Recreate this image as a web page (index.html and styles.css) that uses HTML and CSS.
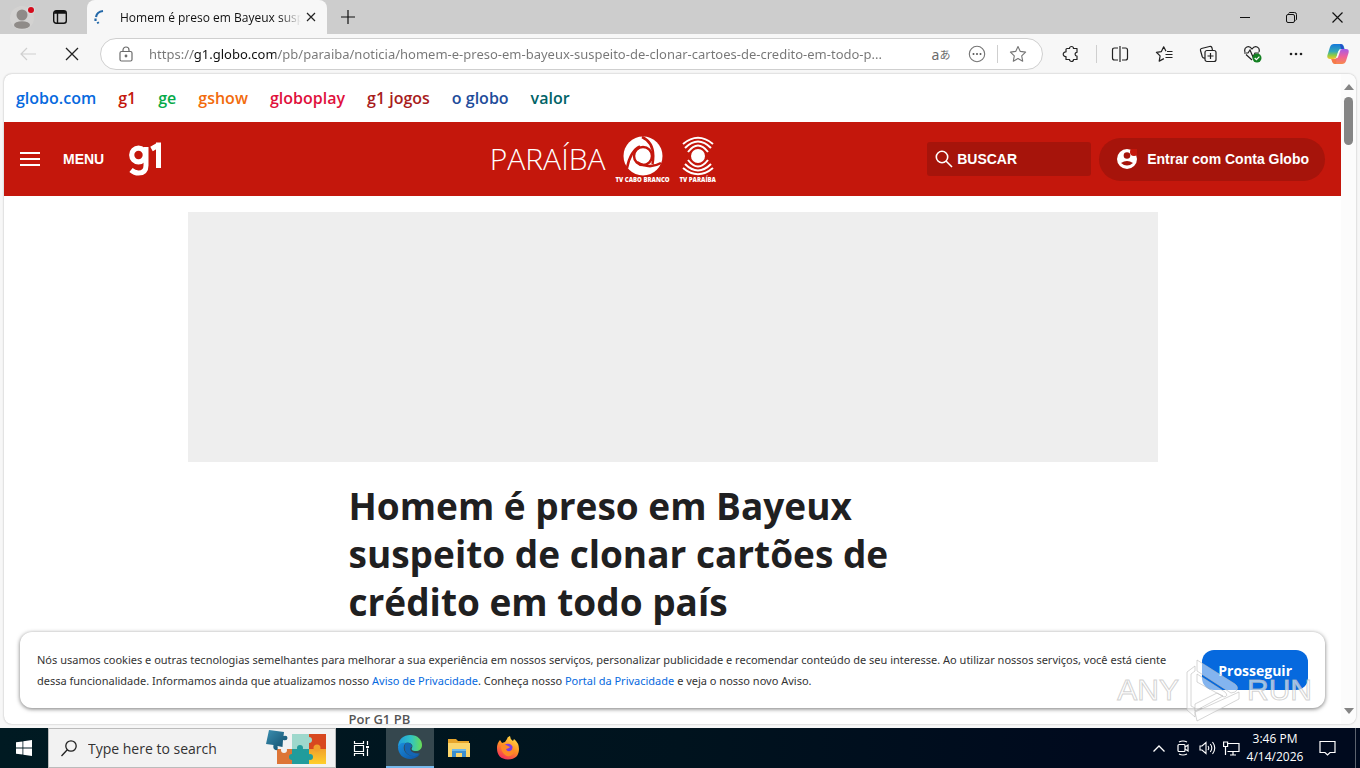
FILE: index.html
```html
<!DOCTYPE html>
<html lang="pt-BR">
<head>
<meta charset="utf-8">
<title>Homem é preso em Bayeux suspeito de clonar cartões de crédito em todo país</title>
<link rel="stylesheet" href="styles.css">
</head>
<body>
<header class="tabstrip">
  <button class="icon-btn profile" aria-label="Perfil"><svg width="30" height="30" viewBox="0 0 30 30"><circle cx="15" cy="16" r="12" fill="#d3d2d1"/><circle cx="15" cy="13" r="5.500" fill="#8f8b88"/><ellipse cx="15" cy="23" rx="8" ry="3.800" fill="#8f8b88"/><circle cx="24" cy="8" r="4" fill="#d9d9d9"/><circle cx="24" cy="8" r="3" fill="#d50b1c"/></svg></button>
  <button class="icon-btn workspaces" aria-label="Guias"><svg width="16" height="16" viewBox="0 0 16 16" fill="none" stroke="#111" stroke-width="1.4"><rect x="1.7" y="1.7" width="12.6" height="12.6" rx="2.5"/><path d="M2 4h12M5.500 4v10" /><path d="M3 3h10" stroke-width="2"/></svg></button>
  <div class="tab">
    <svg class="spinner" width="14" height="16" viewBox="0 0 14 16" fill="none" stroke="#2368a8" stroke-width="2.200"><path d="M3 8C3.500 5 6 2.500 10 2"/><path d="M2.500 9.500v2.500M4.500 13l1 1.500"/></svg>
    <span class="tab-title">Homem é preso em Bayeux suspeito</span>
    <button class="icon-btn tab-close" aria-label="Fechar guia"><svg width="10" height="10" viewBox="0 0 10 10" stroke="#222" stroke-width="1.2"><path d="M1 1l8 8M9 1L1 9"/></svg></button>
  </div>
  <button class="icon-btn new-tab" aria-label="Nova guia"><svg width="14" height="14" viewBox="0 0 14 14" stroke="#111" stroke-width="1.200"><path d="M7 0v14M0 7h14"/></svg></button>
  <div class="window-controls">
    <button class="icon-btn" aria-label="Minimizar"><svg width="10" height="10" viewBox="0 0 10 10" stroke="#111"><path d="M0 5.500h10"/></svg></button>
    <button class="icon-btn" aria-label="Restaurar"><svg width="11" height="11" viewBox="0 0 11 11" fill="none" stroke="#111"><rect x=".5" y="2.500" width="8" height="8" rx="1.500"/><path d="M2.500 1.500Q3 .5 4 .5h4.500q2 0 2 2V7q0 1-1 1.500"/></svg></button>
    <button class="icon-btn" aria-label="Fechar"><svg width="11" height="11" viewBox="0 0 11 11" stroke="#111" stroke-width="1.200"><path d="M.5.5l10 10M10.500.5l-10 10"/></svg></button>
  </div>
</header>

<nav class="toolbar" aria-label="Navegador">
  <button class="icon-btn back" aria-label="Voltar"><svg width="16" height="14" viewBox="0 0 16 14" fill="none" stroke="#cfcfcf" stroke-width="1.200"><path d="M16 7H1M7 1L1 7l6 6"/></svg></button>
  <button class="icon-btn stop" aria-label="Parar"><svg width="14" height="14" viewBox="0 0 14 14" stroke="#222" stroke-width="1.300"><path d="M1 1l12 12M13 1L1 13"/></svg></button>
  <div class="address">
    <svg width="14" height="16" viewBox="0 0 14 16" fill="none" stroke="#6b6b6b" stroke-width="1.200"><rect x="1" y="5.500" width="12" height="9.500" rx="1.500"/><path d="M4 5.500V4a3 3 0 0 1 6 0v1.500"/><circle cx="7" cy="10" r=".8" fill="#555"/></svg>
    <input class="url" aria-label="Endereço" value="https://g1.globo.com/pb/paraiba/noticia/homem-e-preso-em-bayeux-suspeito-de-clonar-cartoes-de-credito-em-todo-p...">
    <button class="icon-btn translate" aria-label="Traduzir"><span>a</span><span class="kana">あ</span></button>
    <button class="icon-btn addr-btn" aria-label="Mais ações"><svg width="18" height="18" viewBox="0 0 18 18" fill="none" stroke="#757575" stroke-width="1.100"><circle cx="9" cy="9" r="7.700"/><g fill="#555" stroke="none"><circle cx="5.500" cy="9" r="1"/><circle cx="9" cy="9" r="1"/><circle cx="12.500" cy="9" r="1"/></g></svg></button>
    <span class="sep"></span>
    <button class="icon-btn addr-btn" aria-label="Favoritar"><svg width="18" height="18" viewBox="0 0 18 18" fill="none" stroke="#757575" stroke-width="1.100" stroke-linejoin="round"><path d="M9 1.500l2.300 4.900 5.300.7-3.900 3.700 1 5.400L9 13.600l-4.700 2.600 1-5.400L1.400 7.100l5.300-.7z"/></svg></button>
  </div>
  <div class="tools">
    <button class="icon-btn" aria-label="Extensões"><svg width="18" height="18" viewBox="0 0 18 18" fill="none" stroke="#222" stroke-width="1.200" stroke-linejoin="round"><path d="M5 3.500h2.500a2 2 0 0 1 4 0H15V7.300a1.900 1.900 0 0 0 0 3.800v3.400h-3.500a2 2 0 0 1-4 0H4V11.500a2.300 2.300 0 1 1 0-4.500V4.500q0-1 1-1z"/></svg></button>
    <span class="sep"></span>
    <button class="icon-btn" aria-label="Tela dividida"><svg width="18" height="18" viewBox="0 0 18 18" fill="none" stroke="#222" stroke-width="1.200"><path d="M9 1v16M7 3H3.500Q1.500 3 1.500 5v8q0 2 2 2H7M11 3h3.500q2 0 2 2v8q0 2-2 2H11"/></svg></button>
    <button class="icon-btn" aria-label="Favoritos"><svg width="18" height="18" viewBox="0 0 18 18" fill="none" stroke="#222" stroke-width="1.200" stroke-linejoin="round"><path d="M11 6.300L8.700 1.800 6.400 6.600l-5 .7 3.700 3.600-.9 5.200 4.700-2.500M12 6.500h5.500M10.500 9.500h7M10.500 12.500h7"/></svg></button>
    <button class="icon-btn" aria-label="Coleções"><svg width="18" height="18" viewBox="0 0 18 18" fill="none" stroke="#222" stroke-width="1.200"><rect x="6" y="5.500" width="11" height="11" rx="2"/><path d="M11.500 8v6M8.500 11h6M6 13Q4 13.500 3.200 11.500L1.500 5.500Q1 4 2.500 3.500l8-2q2-.5 2.500 1.500l.5 2.500"/></svg></button>
    <button class="icon-btn" aria-label="Desempenho"><svg width="19" height="18" viewBox="0 0 19 18" fill="none" stroke="#222" stroke-width="1.200"><path d="M9 15L3 9.500M2 7C.5 2 6-.5 9 4c3-4.500 8.500-2 7 3M1 8h4l2-3 3 7 2-4h4"/><circle cx="14" cy="13" r="4.500" fill="#148022" stroke="none"/><path d="M11.700 13l1.700 1.700 3-3" stroke="#fff"/></svg></button>
    <button class="icon-btn" aria-label="Mais"><svg width="16" height="4" viewBox="0 0 16 4" fill="#222"><circle cx="3" cy="2" r="1.300"/><circle cx="8" cy="2" r="1.300"/><circle cx="13" cy="2" r="1.300"/></svg></button>
    <button class="icon-btn copilot" aria-label="Copilot"><svg width="22" height="20" viewBox="0 0 22 20"><defs><linearGradient id="cpA" x1="0" y1="0" x2="0" y2="1"><stop offset="0" stop-color="#1478dc"/><stop offset=".5" stop-color="#35a9b5"/><stop offset=".75" stop-color="#8ccc45"/><stop offset="1" stop-color="#f5c52c"/></linearGradient><linearGradient id="cpB" x1="0" y1="0" x2="0" y2="1"><stop offset="0" stop-color="#a35be8"/><stop offset=".5" stop-color="#ee609c"/><stop offset="1" stop-color="#f88a4b"/></linearGradient></defs><path d="M7 0h7q2 0 2.700 2l.9 3H14q-2 0-3 3l-1.500 5q-.8 2-3 2H3q-3.500 0-2.500-4L3 3q1-3 4-3z" fill="url(#cpA)"/><path d="M15 20H8q-2 0-2.700-2l-.9-3H8q2 0 3-3l1.500-5q.8-2 3-2H19q3.500 0 2.500 4L19 17q-1 3-4 3z" fill="url(#cpB)"/><path d="M13 0q2 0 3 2l1 3h-3z" fill="#254ec7"/><path d="M9 20q-3 0-4-3l-.6-2H8q1 0 1.500-1z" fill="#f57a49"/><path d="M9.500 13l2.800-7.500 1.200.5-2.800 8z" fill="#f7f7f7"/></svg></button>
  </div>
</nav>

<div class="frame">
  <main class="page">
    <nav class="globo-nav" aria-label="Produtos Globo">
      <a href="#" class="c-globo">globo.com</a><a href="#" class="c-g1">g1</a><a href="#" class="c-ge">ge</a><a href="#" class="c-gshow">gshow</a><a href="#" class="c-play">globoplay</a><a href="#" class="c-jogos">g1 jogos</a><a href="#" class="c-oglobo">o globo</a><a href="#" class="c-valor">valor</a>
    </nav>
    <div class="masthead">
      <div class="mast-left">
        <button class="menu-btn"><svg width="20" height="16" viewBox="0 0 20 16" fill="#fff"><path d="M0 1h20v2H0zM0 7h20v2H0zM0 13h20v2H0z"/></svg><span>MENU</span></button>
        <a href="#" class="g1-logo" aria-label="g1"><svg width="34" height="36" viewBox="0 0 34 36" fill="none" stroke="#fff"><circle cx="10.500" cy="14" r="6.800" stroke-width="5.200"/><path d="M18 6v18.500q0 7.500-7.500 7.500-4 0-7.500-3" stroke-width="5"/><path d="M30.500 1.500v25.500M30.500 4L23.500 8" stroke-width="5"/></svg></a>
      </div>
      <div class="mast-center">
        <a href="#" class="region">PARAÍBA</a>
        <a href="#" class="station"><svg width="40" height="40" viewBox="0 0 40 40"><circle cx="20" cy="20" r="19.500" fill="#fff"/><g fill="none" stroke="#c4170c" stroke-width="2.500"><circle cx="20" cy="20" r="9"/><path d="M19 1C28 5 32 14 29.500 28M38 27C31 31 22 31 14 26M4 32C6 22 9 14 17 10.500"/></g></svg><span>TV CABO BRANCO</span></a>
        <a href="#" class="station"><svg width="34" height="40" viewBox="0 0 34 40" fill="none" stroke="#fff" stroke-width="2"><circle cx="17" cy="20" r="7" fill="#fff" stroke="none"/><path d="M2 8Q17-4.500 32 8M4 12Q17-1 30 12M7 16Q17 3 27 16M2 32Q17 44.500 32 32M4 28Q17 41 30 28M7 24Q17 37 27 24"/></svg><span>TV PARAÍBA</span></a>
      </div>
      <div class="mast-right">
        <label class="search"><svg width="18" height="18" viewBox="0 0 18 18" fill="none" stroke="#fff" stroke-width="1.600"><circle cx="7" cy="7" r="5.700"/><path d="M11 11l6 6"/></svg><input type="search" aria-label="Buscar" placeholder="BUSCAR"></label>
        <button class="login"><svg width="20" height="20" viewBox="0 0 20 20"><circle cx="10" cy="10" r="10" fill="#fff"/><circle cx="10" cy="6.500" r="3.300" fill="#a6140b"/><path d="M4 14q6-4 12 0-6 5-12 0z" fill="#a6140b"/><circle cx="17" cy="3" r="4" fill="#c4170c"/></svg><span>Entrar com Conta Globo</span></button>
      </div>
    </div>
    <div class="ad"></div>
    <article class="article">
      <h1>Homem é preso em Bayeux suspeito de clonar cartões de crédito em todo país</h1>
      <p class="byline">Por G1 PB</p>
    </article>
  </main>
  <div class="scrollbar" aria-hidden="true">
    <svg width="10" height="6" viewBox="0 0 10 6" fill="#858585"><path d="M5 0l5 6H0z"/></svg>
    <span class="thumb"></span>
    <svg width="10" height="6" viewBox="0 0 10 6" fill="#858585"><path d="M0 0h10L5 6z"/></svg>
  </div>
  <section class="cookies" aria-label="Cookies">
    <p>Nós usamos cookies e outras tecnologias semelhantes para melhorar a sua experiência em nossos serviços, personalizar publicidade e recomendar conteúdo de seu interesse. Ao utilizar nossos serviços, você está ciente <br>dessa funcionalidade. Informamos ainda que atualizamos nosso <a href="#">Aviso de Privacidade</a>. Conheça nosso <a href="#">Portal da Privacidade</a> e veja o nosso novo Aviso.</p>
    <button class="accept">Prosseguir</button>
  </section>
  <div class="watermark">
    <span>ANY</span>
    <svg width="56" height="64" viewBox="0 0 56 64" fill="#fff" fill-opacity=".5" stroke="#bbb" stroke-opacity=".6"><path d="M2 14l8-6v5l-4 3v32l4 2v9l-8-7z"/><path d="M12 2l38 24q5 4 0 8l-4 1-34-22zM12 16l28 18q4 4-1 5L12 24zM10 54l44-20v7L12 63zM10 46l22-11 6 3-28 15z"/></svg>
    <span>RUN</span>
  </div>
</div>

<footer class="taskbar">
  <button class="icon-btn task" aria-label="Start"><svg width="16" height="16" viewBox="0 0 16 16" fill="#fff"><path d="M0 2.300L6.500 1.400v6.200H0zM7.300 1.300L16 0v7.600H7.300zM0 8.400h6.500v6.200L0 13.700zM7.300 8.400H16V16l-8.700-1.300z"/></svg></button>
  <label class="task-search">
    <svg width="16" height="17" viewBox="0 0 16 17" fill="none" stroke="#222" stroke-width="1.300"><circle cx="10" cy="6" r="5.200"/><path d="M6.300 9.700L.5 16"/></svg>
    <input aria-label="Search" placeholder="Type here to search">
    <svg width="64" height="36" viewBox="0 0 64 36"><defs><linearGradient id="pz" x1="0" y1="0" x2="1" y2="1"><stop offset="0" stop-color="#3b8fb1"/><stop offset="1" stop-color="#0f4a68"/></linearGradient><linearGradient id="py" x1="0" y1="0" x2="0" y2="1"><stop offset="0" stop-color="#f1a12c"/><stop offset="1" stop-color="#ffcf2b"/></linearGradient></defs><path d="M13 19h15v15H13z" fill="#dd7536"/><path d="M28 4h17v16H28z" fill="#9ed8cc"/><path d="M45 4h17v16H45z" fill="#d8481f"/><path d="M28 19h17v15H28z" fill="#219c9c"/><path d="M45 19h17v15H45z" fill="url(#py)"/><circle cx="45" cy="10" r="3" fill="#9ed8cc"/><circle cx="53" cy="18" r="3.500" fill="#f1a12c"/><circle cx="36" cy="18" r="3" fill="#219c9c"/><circle cx="28" cy="27" r="3" fill="#219c9c"/><circle cx="46" cy="27" r="3" fill="#219c9c"/><circle cx="20" cy="20" r="3" fill="#f2f2f2"/><path d="M5 0l15 2-.5 4q4-1 4 2t-4.500 2l-.5 7-5-1q1 5-2 4t-2-5L2 14z" fill="url(#pz)"/></svg>
  </label>
  <button class="icon-btn task" aria-label="Task view"><svg width="17" height="17" viewBox="0 0 17 17" fill="none" stroke="#fff" stroke-width="1.200"><path d="M1.500 1v2.500h9V1M1.500 16v-2.500h9V16M1.500 5.500h9v6h-9zM14.500 1v4M14.500 8.500V16"/><path d="M13 6h3v2h-3z" fill="#fff" stroke="none"/></svg></button>
  <button class="icon-btn task active" aria-label="Edge"><svg width="24" height="24" viewBox="0 0 24 24"><defs><linearGradient id="e1" x1="0" y1="0" x2="1" y2="0"><stop offset="0" stop-color="#209cdf"/><stop offset=".55" stop-color="#31c4c3"/><stop offset="1" stop-color="#69dd54"/></linearGradient><linearGradient id="e2" x1="0" y1="0" x2="1" y2="1"><stop offset="0" stop-color="#1b8fdc"/><stop offset="1" stop-color="#0c51a4"/></linearGradient></defs><path d="M0 12C0 4 6 0 12 0c8 0 12 5 12 10 0 4-3 6-6 6-4 0-5-1.500-4-3 2-4-3-6-6-5-4 0-7 2-8 4z" fill="url(#e1)"/><path d="M0 12C1 8 5 7 8 8c-3 2-3 7 0 10 4 4 10 3 14 1-3 4-7 5-10 5-7 0-12-5-12-12z" fill="url(#e2)"/><path d="M8 8c3-1 6 1 6 4-3 0-3 7 8 6.500C18 22 12 22 8.500 18 6 15 6 10 8 8z" fill="#1466b4"/></svg></button>
  <button class="icon-btn task" aria-label="Explorer"><svg width="22" height="20" viewBox="0 0 22 20"><path d="M0 1h8l2 2h11v4H0z" fill="#e7a52b"/><path d="M0 5h22v14H0z" fill="#fbd56b"/><path d="M4 19v-8h14v8h-4v-4H8v4z" fill="#3c8fcf"/><path d="M4 11h14v2H4z" fill="#6db9ec"/></svg></button>
  <button class="icon-btn task" aria-label="Firefox"><svg width="22" height="24" viewBox="0 0 22 24"><defs><linearGradient id="ff" x1=".8" y1="0" x2=".3" y2="1"><stop offset="0" stop-color="#ffe14a"/><stop offset=".5" stop-color="#ff9123"/><stop offset="1" stop-color="#f52d5c"/></linearGradient></defs><path d="M3 4l2 3 3-1 2-3q0-2 3-3 0 3 3 5l1-2q5 4 5 10 0 10-11 10.500Q0 23 0 12q0-5 3-8z" fill="url(#ff)"/><circle cx="11" cy="12.500" r="4.800" fill="#7d3ce2"/><path d="M4 10q3-3 7 0l2 1q-2 2-4 2 1 3 4 2 3-1 2-4 4 4 1 7-4 4-8 1-4-3-4-9z" fill="#ff8a26"/></svg></button>
  <div class="tray">
    <button class="icon-btn tray-btn" aria-label="Hidden icons"><svg width="12" height="7" viewBox="0 0 12 7" fill="none" stroke="#fff" stroke-width="1.300"><path d="M.5 6.500L6 1l5.500 5.500"/></svg></button>
    <button class="icon-btn tray-btn" aria-label="Camera"><svg width="12" height="16" viewBox="0 0 12 16" fill="none" stroke="#fff" stroke-width="1.200"><rect x="1" y="4.500" width="7" height="7" rx="1"/><path d="M8 7l3-2v6L8 9M2 2q4-2 8 0M2 14q4 2 8 0"/></svg></button>
    <button class="icon-btn tray-btn" aria-label="Volume"><svg width="17" height="14" viewBox="0 0 17 14" fill="none" stroke="#fff" stroke-width="1.100"><path d="M1 5v4h2l4 3.500v-11L3 5zM9 5q1.500 2 0 4M11.300 3q3 4 0 8M13.500 1q4.500 6 0 12"/></svg></button>
    <button class="icon-btn tray-btn" aria-label="Network"><svg width="17" height="15" viewBox="0 0 17 15" fill="none" stroke="#fff" stroke-width="1.200"><path d="M5 2.500h11v8H4.500M10 10.500V14M7 14h6M2.500 5.500V14M.6 1h4v4.500h-4z"/></svg></button>
    <button class="clock"><span>3:46 PM</span><span>4/14/2026</span></button>
    <button class="icon-btn notify" aria-label="Notifications"><svg width="17" height="17" viewBox="0 0 17 17" fill="none" stroke="#fff" stroke-width="1.200"><path d="M1 1.500h15v11h-5L8.500 15 6 12.500H1z"/></svg></button>
  </div>
</footer>
</body>
</html>
```
FILE: styles.css
```css
* { box-sizing: border-box; }
html, body { height: 100%; }
body {
  margin: 0;
  display: flex;
  flex-direction: column;
  overflow: hidden;
  background: #f7f7f7;
  font-family: "Open Sans", "Noto Sans", sans-serif;
  color: #222;
}
a { color: inherit; text-decoration: none; }
button, input { font: inherit; color: inherit; border: 0; padding: 0; background: none; }
input { outline: 0; min-width: 0; }
svg { display: block; flex: none; }
.icon-btn { display: flex; align-items: center; justify-content: center; flex: none; }

/* Browser tab strip */
.tabstrip { display: flex; flex: none; height: 34px; background: #cdcdcd; }
.profile { width: 44px; }
.workspaces { width: 32px; }
.tab {
  display: flex;
  align-items: center;
  width: 240px;
  margin-left: 11px;
  padding: 0 6px;
  border-radius: 8px 8px 0 0;
  background: #f7f7f7;
}
.spinner { margin-right: 13px; }
.tab-title {
  flex: 1;
  overflow: hidden;
  white-space: nowrap;
  font-size: 12px;
  color: #111;
  -webkit-mask-image: linear-gradient(90deg, #000 88%, transparent);
  mask-image: linear-gradient(90deg, #000 88%, transparent);
}
.tab-close { width: 20px; height: 20px; }
.new-tab { width: 42px; }
.window-controls { display: flex; margin-left: auto; }
.window-controls .icon-btn { width: 46px; }

/* Browser toolbar */
.toolbar { display: flex; align-items: center; flex: none; height: 40px; }
.back { width: 56px; }
.stop { width: 32px; margin-right: 12px; }
.address {
  display: flex;
  align-items: center;
  flex: 1;
  height: 32px;
  padding: 0 4px 0 18px;
  border: 1px solid #cfcfcf;
  border-radius: 16px;
  background: #fff;
}
.url {
  flex: 1;
  margin: 0 12px 0 16px;
  font: 13px "Noto Sans", sans-serif;
  color: transparent;
  background: linear-gradient(90deg, #767676 44px, #111 44px, #111 127px, #767676 127px);
  -webkit-background-clip: text;
  background-clip: text;
}
.translate { width: 32px; color: #6b6b6b; font: 14px "Noto Sans", sans-serif; }
.kana { font: 11px "Noto Sans CJK JP", sans-serif; }
.addr-btn { width: 40px; }
.sep { flex: none; width: 1px; height: 18px; background: #cfcfcf; }
.tools { display: flex; align-items: center; padding: 0 2px 0 6px; }
.tools .icon-btn { width: 44px; height: 32px; }
.tools .copilot { width: 40px; }
.tools .sep { margin: 0 1px 0 3px; }

/* Web page frame */
.frame {
  position: relative;
  display: flex;
  flex: 1;
  min-height: 0;
  margin: 0 4px 4px;
  overflow: hidden;
  border-radius: 8px;
  background: #fff;
  box-shadow: 0 0 2px #aaa;
}
.page { flex: 1; overflow: hidden; }
.scrollbar {
  display: flex;
  flex-direction: column;
  align-items: center;
  width: 15px;
  padding: 10px 0;
  background: #fcfcfc;
}
.thumb { width: 9px; height: 48px; margin: 7px 0 auto; border-radius: 5px; background: #858585; }

.globo-nav {
  display: flex;
  align-items: center;
  gap: 22px;
  height: 48px;
  padding: 0 12px;
  font-size: 16px;
  font-weight: 600;
}
.c-globo { color: #0669de; }
.c-g1 { color: #c4170c; }
.c-ge { color: #06aa48; }
.c-gshow { color: #f26b0c; }
.c-play { color: #e0103c; }
.c-jogos { color: #a81c1c; }
.c-oglobo { color: #1e4c9a; }
.c-valor { color: #006367; }

.masthead {
  display: flex;
  align-items: center;
  height: 74px;
  padding: 0 16px;
  background: #c4170c;
  color: #fff;
  font-family: "Liberation Sans", sans-serif;
  font-size: 14px;
  font-weight: 700;
}
.mast-left { display: flex; align-items: center; flex: 327 1 auto; gap: 24px; }
.mast-right { display: flex; align-items: center; flex: 211 1 auto; justify-content: flex-end; gap: 8px; }
.menu-btn { display: flex; align-items: center; gap: 23px; }
.mast-center { display: flex; align-items: center; gap: 10px; font-family: "Open Sans", sans-serif; }
.region { font-size: 30px; font-weight: 300; line-height: 40px; }
.station { display: flex; flex-direction: column; align-items: center; padding-top: 2px; font-size: 6px; line-height: 8px; font-weight: 800; }
.search {
  display: flex;
  align-items: center;
  gap: 4px;
  width: 164px;
  height: 34px;
  padding: 0 8px;
  border-radius: 3px;
  background: #a6140b;
}
.search input { flex: 1; }
.search input::placeholder { color: #fff; opacity: 1; }
.login {
  display: flex;
  align-items: center;
  gap: 10px;
  height: 43px;
  padding: 0 16px 0 18px;
  border-radius: 22px;
  background: #a6140b;
}

.ad { max-width: 970px; height: 250px; margin: 16px auto 20px; background: #eee; }
.article { max-width: 648px; margin: 0 auto; }
h1 { max-width: 580px; margin: 0; font-size: 37px; line-height: 48px; font-weight: 700; color: #1f2021; }
.byline { margin: 84px 0 0; font-size: 13px; line-height: 18px; font-weight: 600; color: #555; }

/* Cookie banner */
.cookies {
  position: absolute;
  left: 16px;
  right: 31px;
  bottom: 16px;
  display: flex;
  align-items: center;
  justify-content: space-between;
  gap: 24px;
  padding: 17px;
  border-radius: 12px;
  background: #fff;
  box-shadow: 0 1px 4px #777;
}
.cookies p { margin: 0; font: 11px/21px "Noto Sans", sans-serif; color: #333; }
.cookies a { color: #0669de; }
.accept {
  flex: none;
  height: 40px;
  padding: 0 16px;
  border-radius: 12px;
  background: #0669de;
  color: #fff;
  font-size: 14px;
  font-weight: 700;
}
.watermark {
  position: absolute;
  right: 44px;
  bottom: 2px;
  display: flex;
  align-items: center;
  gap: 6px;
  pointer-events: none;
  font: 30px "Liberation Sans", sans-serif;
  color: rgba(255, 255, 255, .6);
  -webkit-text-stroke: 1px rgba(190, 190, 190, .7);
}

/* Desktop taskbar */
.taskbar {
  display: flex;
  flex: none;
  height: 40px;
  background: linear-gradient(90deg, #001a22, #00131e 50%, #000a1e 80%);
  color: #fff;
}
.task { width: 48px; margin-right: 1px; }
.task:first-child { margin-right: 0; }
.active { background: #35474e; border-bottom: 2px solid #76b9ed; }
.task-search {
  display: flex;
  align-items: center;
  width: 288px;
  margin-right: 1px;
  padding: 0 7px 0 12px;
  border: 1px solid #bbb;
  background: #f2f2f2;
}
.task-search input { flex: 1; margin-left: 11px; font-size: 14px; }
.task-search input::placeholder { color: #333; opacity: 1; }
.tray { display: flex; margin-left: auto; padding-right: 4px; }
.tray-btn { width: 24px; }
.clock {
  display: flex;
  flex-direction: column;
  align-items: center;
  justify-content: center;
  width: 64px;
  font-size: 12px;
  line-height: 18px;
}
.notify { width: 49px; padding-right: 8px; border-right: 1px solid #5c636e; }
```
